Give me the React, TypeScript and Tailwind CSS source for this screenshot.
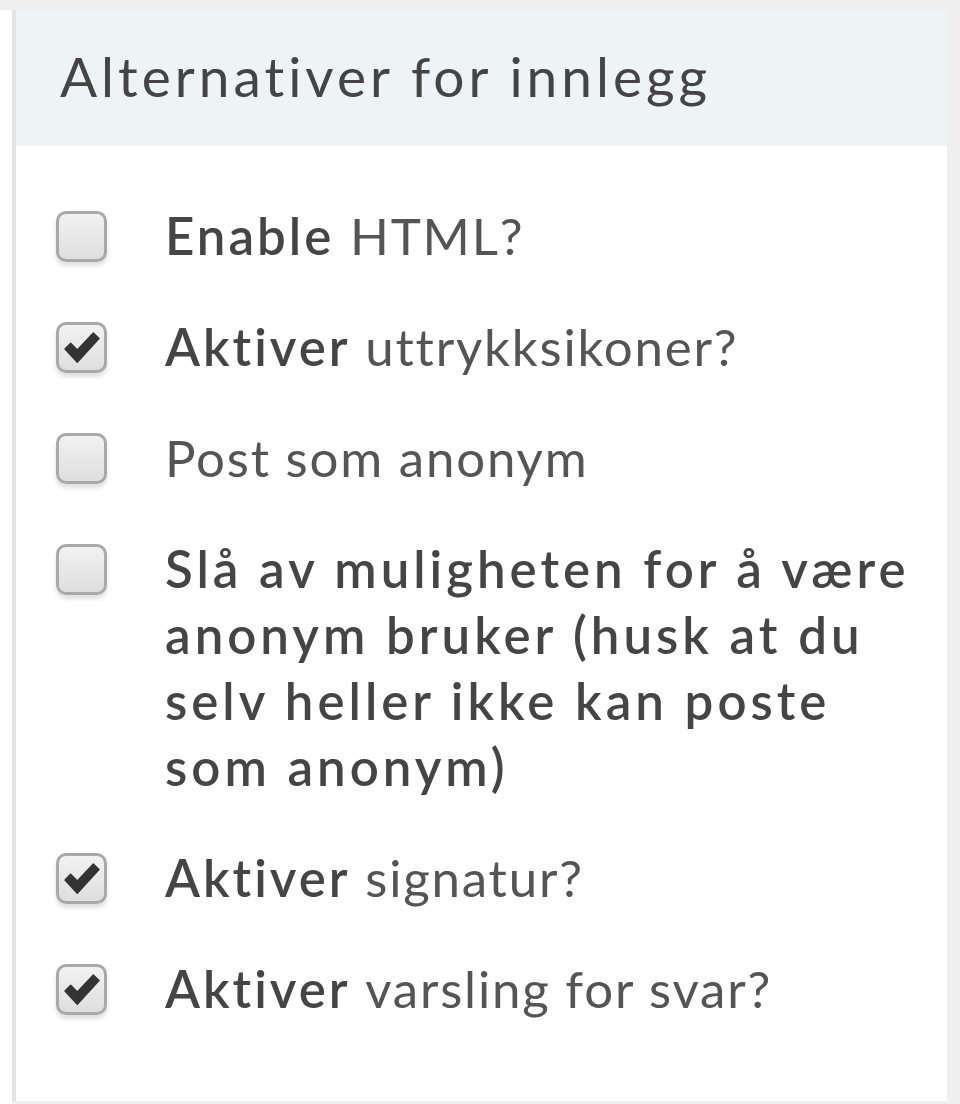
interface Option {
  bold?: string;
  text: string;
  checked: boolean;
  allBold?: boolean;
}

const OPTIONS: Option[] = [
  { bold: "Enable", text: "HTML?", checked: false },
  { bold: "Aktiver", text: "uttrykksikoner?", checked: true },
  { text: "Post som anonym", checked: false },
  {
    text: "Slå av muligheten for å være anonym bruker (husk at du selv heller ikke kan poste som anonym)",
    checked: false,
    allBold: true,
  },
  { bold: "Aktiver", text: "signatur?", checked: true },
  { bold: "Aktiver", text: "varsling for svar?", checked: true },
];

function CheckMark() {
  return (
    <svg viewBox="0 0 40 36" className="w-[38px] h-[34px]" aria-hidden>
      <path
        d="M2 19 L8 13 L15 20 L32 2 L38 8 L15 33 Z"
        fill="#333"
        stroke="#333"
        strokeWidth="1.5"
        strokeLinejoin="round"
      />
    </svg>
  );
}

function Checkbox({ checked }: { checked: boolean }) {
  return (
    <div className="mt-[8px] w-[51px] h-[51px] shrink-0 rounded-[10px] border-[3px] border-[#a9a9a9] bg-gradient-to-b from-[#f2f2f2] to-[#dedede] shadow-[0_4px_4px_rgba(0,0,0,0.12)] flex items-center justify-center">
      {checked && <CheckMark />}
    </div>
  );
}

export default function App() {
  return (
    <div
      className="w-[960px] h-[1104px] bg-[#efefef] pt-[10px] flex overflow-hidden"
      style={{ fontFamily: "Lato, 'Open Sans', sans-serif" }}
    >
      <div className="w-[12px] bg-white shrink-0" />
      <div className="w-[935px] h-[1091px] bg-white border-l-[4px] border-[#e4e4e4] flex flex-col">
        {/* Header */}
        <div className="h-[136px] bg-[#eef3f5] pl-[44px] flex items-center">
          <h2 className="text-[55px] text-[#444] tracking-[4px] leading-none pb-[4px]">
            Alternativer for innlegg
          </h2>
        </div>

        {/* Options */}
        <div className="pt-[57px] pl-[40px] pr-[24px] flex flex-col gap-[45px]">
          {OPTIONS.map((opt, i) => (
            <div key={i} className="flex items-start gap-[58px]">
              <Checkbox checked={opt.checked} />
              <div
                className={`text-[51px] leading-[66px] ${
                  opt.allBold
                    ? "font-semibold text-[#454545] tracking-[4px]"
                    : "text-[#555] tracking-[1.8px]"
                }`}
              >
                {opt.bold && (
                  <span className="font-semibold text-[#454545] tracking-[3px]">{opt.bold} </span>
                )}
                {opt.text}
              </div>
            </div>
          ))}
        </div>
      </div>
    </div>
  );
}
